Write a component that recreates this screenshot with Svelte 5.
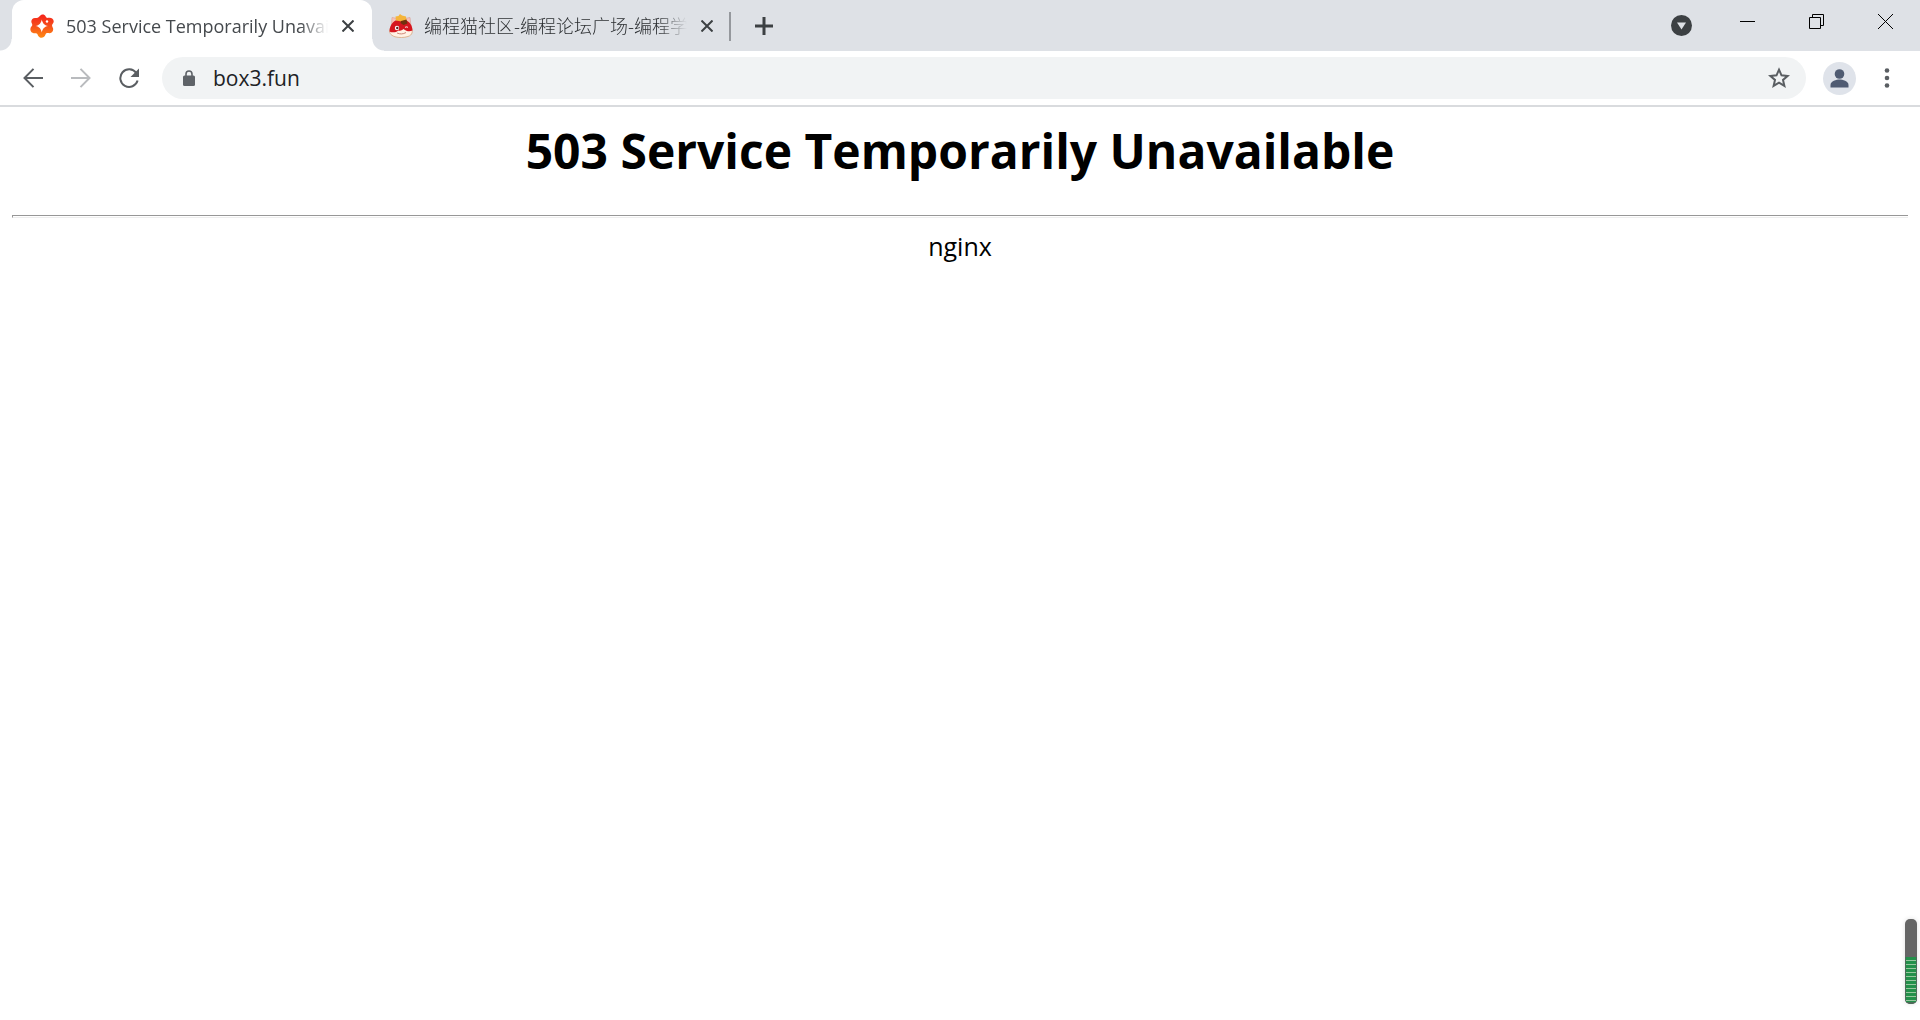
<script>
  let address = $state('box3.fun');
</script>

<div class="browser">
  <header>
    <div class="tabs">
      <div class="tab active">
        <svg class="favicon" viewBox="0 0 24 24" aria-hidden="true">
          <defs>
            <linearGradient id="flame" x1="0" y1="0" x2="0" y2="1">
              <stop offset="0" stop-color="#f5221b" />
              <stop offset=".5" stop-color="#f6501c" />
              <stop offset="1" stop-color="#ff8a12" />
            </linearGradient>
          </defs>
          <path fill="url(#flame)" d="M9.800 2C11 0 14.500-.3 15.600 2.200c.5 1.300 1.300 1.900 2.700 1.600C21.500 3.200 24 5.200 23.700 7.800c-.2 1.300-1.300 2-1.600 3.200-.3 1.400 1 2.200 1.100 4.100.1 3-2.600 4.500-5 4-1.600-.3-2.400.3-2.800 1.700-.9 3-4.700 4.100-6.700 1.800-.9-1-.9-2.300-2-3-1.200-.7-2.600.1-4.200-.8C.1 17.300-.3 14.300 1.400 12.600c1-1 1.100-1.800.5-3C.4 6.900 2 4 5 4c2.400 0 3.500-.1 4.800-2Z" />
          <path fill="#fff" d="M11.800 5.500c.9 4 2.400 5.600 6.200 6.500-3.800.9-5.300 2.500-6.200 6.500-.9-4-2.400-5.600-6.200-6.500 3.800-.9 5.300-2.500 6.200-6.500Z" />
          <circle cx="17" cy="7.500" r="1.200" fill="#fff" />
        </svg>
        <span class="title">503 Service Temporarily Unavailable</span>
        <button class="close" aria-label="Close tab">
          <svg viewBox="0 0 12 12"><path d="M.5.5l11 11M11.500.5L.5 11.500" /></svg>
        </button>
      </div>
      <div class="tab">
        <svg class="favicon" viewBox="0 0 24 24" aria-hidden="true">
          <path fill="#f7c3ba" stroke="#d99a90" stroke-width=".6" d="M3 3.500 8 4.500l-5.500 7ZM16 4.500l5-1 1 8.500Z" />
          <path fill="#fff1e4" stroke="#d9a67c" stroke-width=".8" d="M1.500 14C-.5 18 1 21 6 22.800c4 1 9 1 13-.3 4.500-1.500 5-5 3.500-8.500Z" />
          <path fill="#d5161f" d="M.5 17.500C.8 10 5 5.500 12 5.500s11.500 4.500 11.500 11c-3 1.500-6 .8-9-1.500-2 2-3.500 1.800-5 1.500C7 18.500 3.500 19 .5 17.500Z" />
          <path fill="#f5b53a" d="M6.500 2.500 9.500 2 11 0l2 1.500 4 1 .5 4.500-5 .5-5.500-1Z" />
          <path fill="#71310e" d="M12 7l5.500-1.500 1 4-4 1.500-3-2Z" />
          <circle cx="8" cy="14" r="2.200" fill="#fff" />
          <circle cx="8.300" cy="14" r="1.200" fill="#5b2020" />
          <path fill="none" stroke="#fff" stroke-width="1" d="M16 13.500c1-.8 2-.8 3 0" />
          <path fill="none" stroke="#c7796a" stroke-width=".9" d="M8 19c3 1.300 6 1.300 9-.5" />
        </svg>
        <span class="title">编程猫社区-编程论坛广场-编程学习</span>
        <button class="close" aria-label="Close tab">
          <svg viewBox="0 0 12 12"><path d="M.5.5l11 11M11.500.5L.5 11.500" /></svg>
        </button>
      </div>
      <button class="new" aria-label="New tab">
        <svg viewBox="0 0 18 18"><path d="M9 0v18M0 9h18" /></svg>
      </button>
    </div>
    <div class="window">
      <button class="search" aria-label="Search tabs">
        <svg viewBox="0 0 21 21"><circle cx="10.500" cy="10.500" r="10.500" fill="#3c4043" /><path d="M6 7.500h9l-4.500 7Z" /></svg>
      </button>
      <button aria-label="Minimize"><svg viewBox="0 0 15 15"><path d="M0 7.500h15" /></svg></button>
      <button aria-label="Restore"><svg viewBox="0 0 15 15"><path d="M.5 3.500h11v11H.5ZM3.500 3V.5h11v11H12" /></svg></button>
      <button aria-label="Close window"><svg viewBox="0 0 15 15"><path d="M0 0l15 15M15 0L0 15" /></svg></button>
    </div>
  </header>

  <nav class="toolbar" aria-label="Navigation">
    <button aria-label="Back"><svg class="nav" viewBox="0 0 20 20"><path d="M20 10H1.500M10.500 .9 1.500 10l9 9.100" /></svg></button>
    <button aria-label="Forward" disabled><svg class="nav" viewBox="0 0 20 20"><path d="M0 10h18.500M9.500 .9l9 9.100-9 9.100" /></svg></button>
    <button aria-label="Reload">
      <svg class="nav" viewBox="0 0 20 20"><path d="M17.300 5A8.800 8.800 0 1 0 18.600 12.500" /><path class="solid" d="M20 .5V9h-8.500Z" /></svg>
    </button>
    <div class="omnibox">
      <svg class="lock" viewBox="0 0 12 16" aria-hidden="true">
        <path fill="none" stroke="#5f6368" stroke-width="1.600" d="M3 7V4a3 3 0 0 1 6 0v3" />
        <rect y="5.500" width="12" height="10.500" rx="1.500" fill="#5f6368" />
      </svg>
      <input aria-label="Address" bind:value={address} spellcheck="false" />
      <button class="star" aria-label="Bookmark this tab">
        <svg viewBox="0 0 22 22"><path d="M11 2.700l2.500 5.600 6.100.6-4.600 4 1.400 6L11 15.700l-5.400 3.200 1.400-6-4.600-4 6.100-.6Z" /></svg>
      </button>
    </div>
    <button class="profile" aria-label="Profile">
      <svg viewBox="0 0 33 33"><circle cx="16.500" cy="16.500" r="16.500" fill="#dfe3ea" /><circle cx="16.500" cy="12" r="4.800" fill="#4f5b72" /><path fill="#4f5b72" d="M7.500 25.500V23c0-4 6-5.500 9-5.500s9 1.500 9 5.500v2.500Z" /></svg>
    </button>
    <button class="menu" aria-label="Menu">
      <svg viewBox="0 0 6 20"><circle cx="3" cy="2.500" r="2.300" /><circle cx="3" cy="10" r="2.300" /><circle cx="3" cy="17.500" r="2.300" /></svg>
    </button>
  </nav>

  <main>
    <h1>503 Service Temporarily Unavailable</h1>
    <hr />
    <p>nginx</p>
  </main>
  <div class="meter" aria-hidden="true"><div class="level"></div></div>
</div>

<style>
  :global(body) { margin: 0; background: #fff; }
  .browser {
    min-height: 100vh;
    font-family: "Open Sans", "Noto Sans", "Noto Sans CJK SC", sans-serif;
    color: #000;
  }
  button {
    display: flex;
    align-items: center;
    justify-content: center;
    flex: none;
    margin: 0;
    padding: 0;
    border: 0;
    background: none;
  }
  svg { display: block; flex: none; }
  header {
    display: flex;
    justify-content: space-between;
    height: 51px;
    background: #dee1e6;
  }
  .tabs { display: flex; padding-left: 12px; }
  .tab {
    display: flex;
    align-items: center;
    box-sizing: border-box;
    width: 359px;
    padding: 0 12px 0 17px;
    position: relative;
  }
  .tab:not(.active)::after {
    content: "";
    position: absolute;
    right: 0;
    top: 12px;
    width: 2px;
    height: 29px;
    background: #95989d;
  }
  .active { width: 360px; padding-left: 18px; background: #fff; border-radius: 12px 12px 0 0; }
  .active::before, .active::after {
    content: "";
    position: absolute;
    bottom: 0;
    width: 12px;
    height: 12px;
  }
  .active::before { right: 100%; background: radial-gradient(circle at 0 0, transparent 11px, #fff 12px); }
  .active::after { left: 100%; background: radial-gradient(circle at 100% 0, transparent 11px, #fff 12px); }
  .favicon { width: 24px; height: 24px; }
  .title {
    flex: 1;
    margin-left: 12px;
    overflow: hidden;
    white-space: nowrap;
    font-size: 18px;
    line-height: 26px;
    color: #45494d;
    -webkit-mask-image: linear-gradient(to left, transparent, #000 28px);
    mask-image: linear-gradient(to left, transparent, #000 28px);
  }
  .tab:not(.active) .title {
    margin-left: 11px;
    padding-bottom: 2px;
    font-family: "Noto Sans CJK SC", sans-serif;
    font-weight: 300;
    color: #2c2f32;
  }
  .close { width: 24px; height: 24px; margin-left: 8px; }
  .close svg { width: 12px; height: 12px; }
  .close path { stroke: #3c4043; stroke-width: 2; }
  .new { width: 42px; height: 51px; margin-left: 12px; }
  .new svg { width: 18px; height: 18px; }
  .new path { stroke: #3c4043; stroke-width: 3; }
  .window { display: flex; }
  .window button { width: 69px; height: 43px; }
  .window svg { width: 15px; height: 15px; }
  .window path { fill: none; stroke: #000; stroke-width: 1; }
  .window .search { width: 43px; height: 51px; margin-right: 10px; }
  .window .search svg { width: 21px; height: 21px; }
  .window .search path { fill: #dee1e6; stroke: none; }
  .toolbar {
    display: flex;
    align-items: center;
    height: 54px;
    padding: 0 9px;
    border-bottom: 2px solid #d9dbde;
    background: #fff;
  }
  .toolbar > button { width: 48px; height: 42px; }
  .nav { width: 20px; height: 20px; }
  .nav path { fill: none; stroke: #5a5e62; stroke-width: 2; }
  .nav .solid { fill: #5a5e62; stroke: none; }
  button:disabled path { stroke: #b9bbbe; }
  .omnibox {
    display: flex;
    align-items: center;
    flex: 1;
    height: 42px;
    margin-left: 9px;
    padding: 0 16px 0 21px;
    border-radius: 21px;
    background: #f1f3f4;
  }
  .lock { width: 12px; height: 16px; }
  input {
    flex: 1;
    min-width: 0;
    margin: 0 0 0 18px;
    padding: 0;
    border: 0;
    outline: 0;
    background: none;
    font: 21px/30px "Open Sans", "Noto Sans", sans-serif;
    color: #202124;
  }
  .star svg { width: 22px; height: 22px; }
  .star path { fill: none; stroke: #5a5e62; stroke-width: 2; }
  .toolbar > .profile { width: 33px; margin-left: 17px; }
  .profile svg { width: 33px; height: 33px; }
  .toolbar > .menu { width: 48px; margin-left: 7px; }
  .menu svg { width: 6px; height: 20px; fill: #5a5e62; }
  main { padding: 6px 12px; text-align: center; }
  h1 { margin: 0; font-size: 48px; line-height: 76px; font-weight: 700; }
  hr {
    height: 1px;
    margin: 26px 0 11px;
    border: solid #979797;
    border-width: 1px 0 0 1px;
    border-bottom: 1px solid #eee;
  }
  p { margin: 0; font-size: 25px; line-height: 34px; }
  .meter {
    position: fixed;
    right: 3px;
    bottom: 16px;
    width: 12px;
    height: 85px;
    display: flex;
    flex-direction: column;
    justify-content: flex-end;
    overflow: hidden;
    border-radius: 5px;
    background: #656565;
    box-shadow: 0 0 5px #0002;
  }
  .level {
    height: 45px;
    border: solid #4d6b58;
    border-width: 0 1px 2px;
    background: repeating-linear-gradient(#23904a 0 3px, #98c69e 3px 4px);
  }
</style>
